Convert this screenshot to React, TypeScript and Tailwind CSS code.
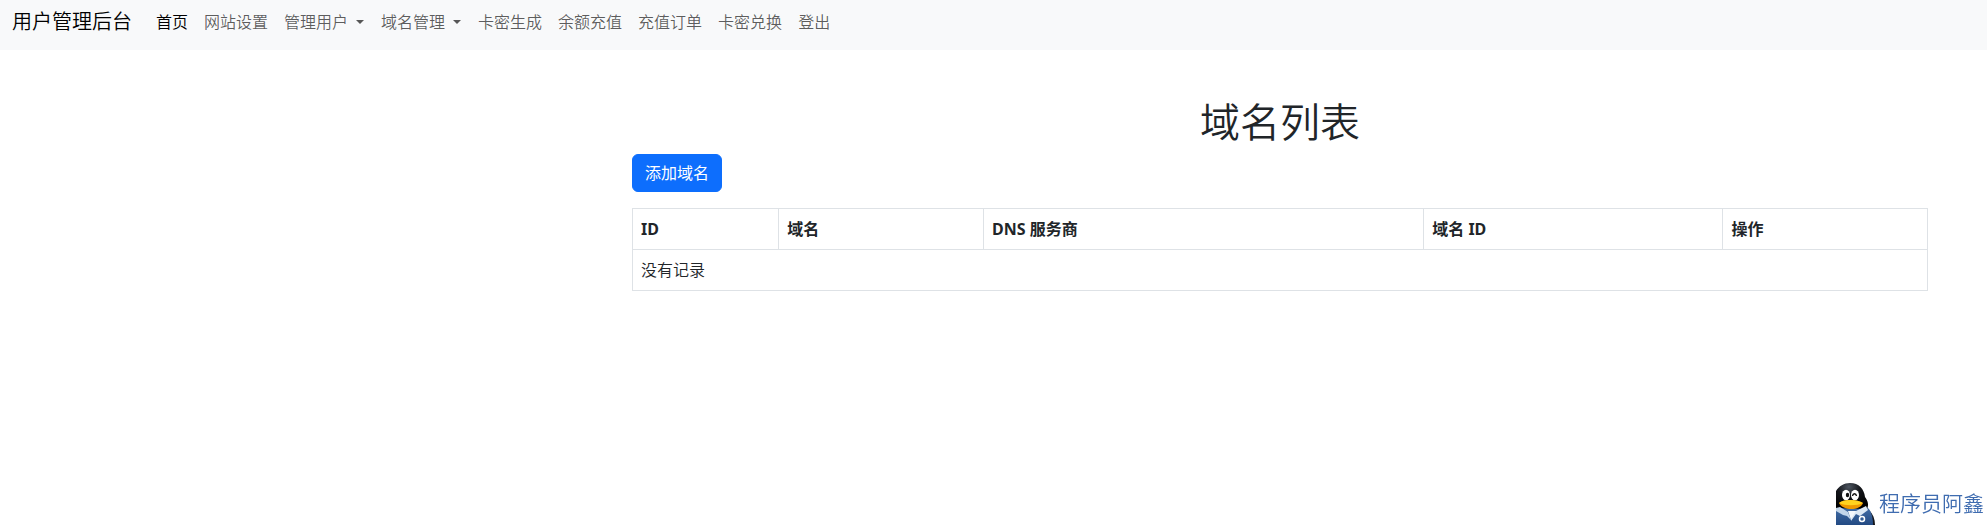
import React from "react";

type NavItem = {
  label: string;
  active?: boolean;
  dropdown?: boolean;
};

const navItems: NavItem[] = [
  { label: "首页", active: true },
  { label: "网站设置" },
  { label: "管理用户", dropdown: true },
  { label: "域名管理", dropdown: true },
  { label: "卡密生成" },
  { label: "余额充值" },
  { label: "充值订单" },
  { label: "卡密兑换" },
  { label: "登出" },
];

const columns = [
  { title: "ID", width: "w-[11.3%]" },
  { title: "域名", width: "w-[15.8%]" },
  { title: "DNS 服务商", width: "w-[34%]" },
  { title: "域名 ID", width: "w-[23.1%]" },
  { title: "操作", width: "w-[15.8%]" },
];

const Navbar: React.FC = () => {
  return (
    <nav className="flex items-center bg-[#f8f9fa] px-3 pt-0.5 pb-2">
      <a href="#" className="mr-4 text-xl text-black">
        用户管理后台
      </a>
      <ul className="flex">
        {navItems.map((item) => (
          <li key={item.label}>
            <a
              href="#"
              className={`flex items-center p-2 ${
                item.active ? "text-black" : "text-black/65"
              }`}
            >
              {item.label}
              {item.dropdown && (
                <span className="mr-px ml-2 border-x-4 border-t-4 border-x-transparent" />
              )}
            </a>
          </li>
        ))}
      </ul>
    </nav>
  );
};

const Penguin: React.FC = () => {
  return (
    <svg viewBox="0 0 40 42" className="h-[42px] w-10" aria-hidden="true">
      <defs>
        <radialGradient id="head" cx="0.4" cy="0.15" r="0.8">
          <stop offset="0" stopColor="#4d5560" />
          <stop offset="0.45" stopColor="#14161b" />
          <stop offset="1" stopColor="#000" />
        </radialGradient>
        <linearGradient id="shirt" x1="0" y1="0" x2="0" y2="1">
          <stop offset="0" stopColor="#4773ab" />
          <stop offset="1" stopColor="#234a83" />
        </linearGradient>
      </defs>
      <path d="M33 27C37 31 39 36 39 42H34Z" fill="#14161b" />
      <path d="M0 42V26L7 22H28L33 26C36 30 37 36 37 42Z" fill="url(#shirt)" />
      <path d="M0 25V8C3 3 8 0 14 0C23 0 28 6 29 14C32 18 33 22 31 26Z" fill="url(#head)" />
      <path d="M12 28L15 37L21 28Z" fill="#f4f8fc" />
      <path d="M0 25L4 24L12 29L15 37L11 33L7 32L0 28Z" fill="#c3d6ea" />
      <path d="M30 23L32 27L24 33L20 31L15 38L15 36L20 28Z" fill="#dce8f4" />
      <ellipse cx="10" cy="12" rx="4" ry="5.2" fill="#fff" />
      <ellipse cx="19" cy="12" rx="4" ry="5.2" fill="#fff" />
      <ellipse cx="11.500" cy="12" rx="1.700" ry="2.300" fill="#111" />
      <path d="M16.500 13C17 10 20 10 20.500 13" fill="none" stroke="#111" strokeWidth="1.400" />
      <path d="M3 20C7 16 21 16 27 20C24 28 7 28 3 20Z" fill="#ee9800" />
      <path d="M3 20C7 16 21 16 27 20C21 23 9 23 3 20Z" fill="#ffd21f" />
      <circle cx="26" cy="36" r="2.500" fill="#315c96" stroke="#fff" strokeWidth="1.500" />
    </svg>
  );
};

const App: React.FC = () => {
  return (
    <div className="min-h-screen bg-white font-['Noto_Sans','Noto_Sans_CJK_SC',sans-serif] text-base font-[350] text-[#212529]">
      <Navbar />
      <main className="mr-[47px] ml-auto max-w-[1320px] px-3 pt-12">
        <h1 className="mb-2 text-center text-[40px] leading-12 font-[350]">域名列表</h1>
        <button
          type="button"
          className="mb-4 block rounded-md border border-[#0d6efd] bg-[#0d6efd] px-3 py-1.5 font-normal text-white"
        >
          添加域名
        </button>
        <table className="w-full border-collapse text-left">
          <thead>
            <tr>
              {columns.map((column) => (
                <th
                  key={column.title}
                  className={`border border-[#dee2e6] p-2 font-bold ${column.width}`}
                >
                  {column.title}
                </th>
              ))}
            </tr>
          </thead>
          <tbody>
            <tr>
              <td colSpan={5} className="border border-[#dee2e6] p-2">
                没有记录
              </td>
            </tr>
          </tbody>
        </table>
      </main>
      <div className="fixed right-[3px] bottom-0 flex items-center gap-[3px] text-[21px] text-[#3f6cb0]">
        <Penguin />
        <span>程序员阿鑫</span>
      </div>
    </div>
  );
};

export default App;
